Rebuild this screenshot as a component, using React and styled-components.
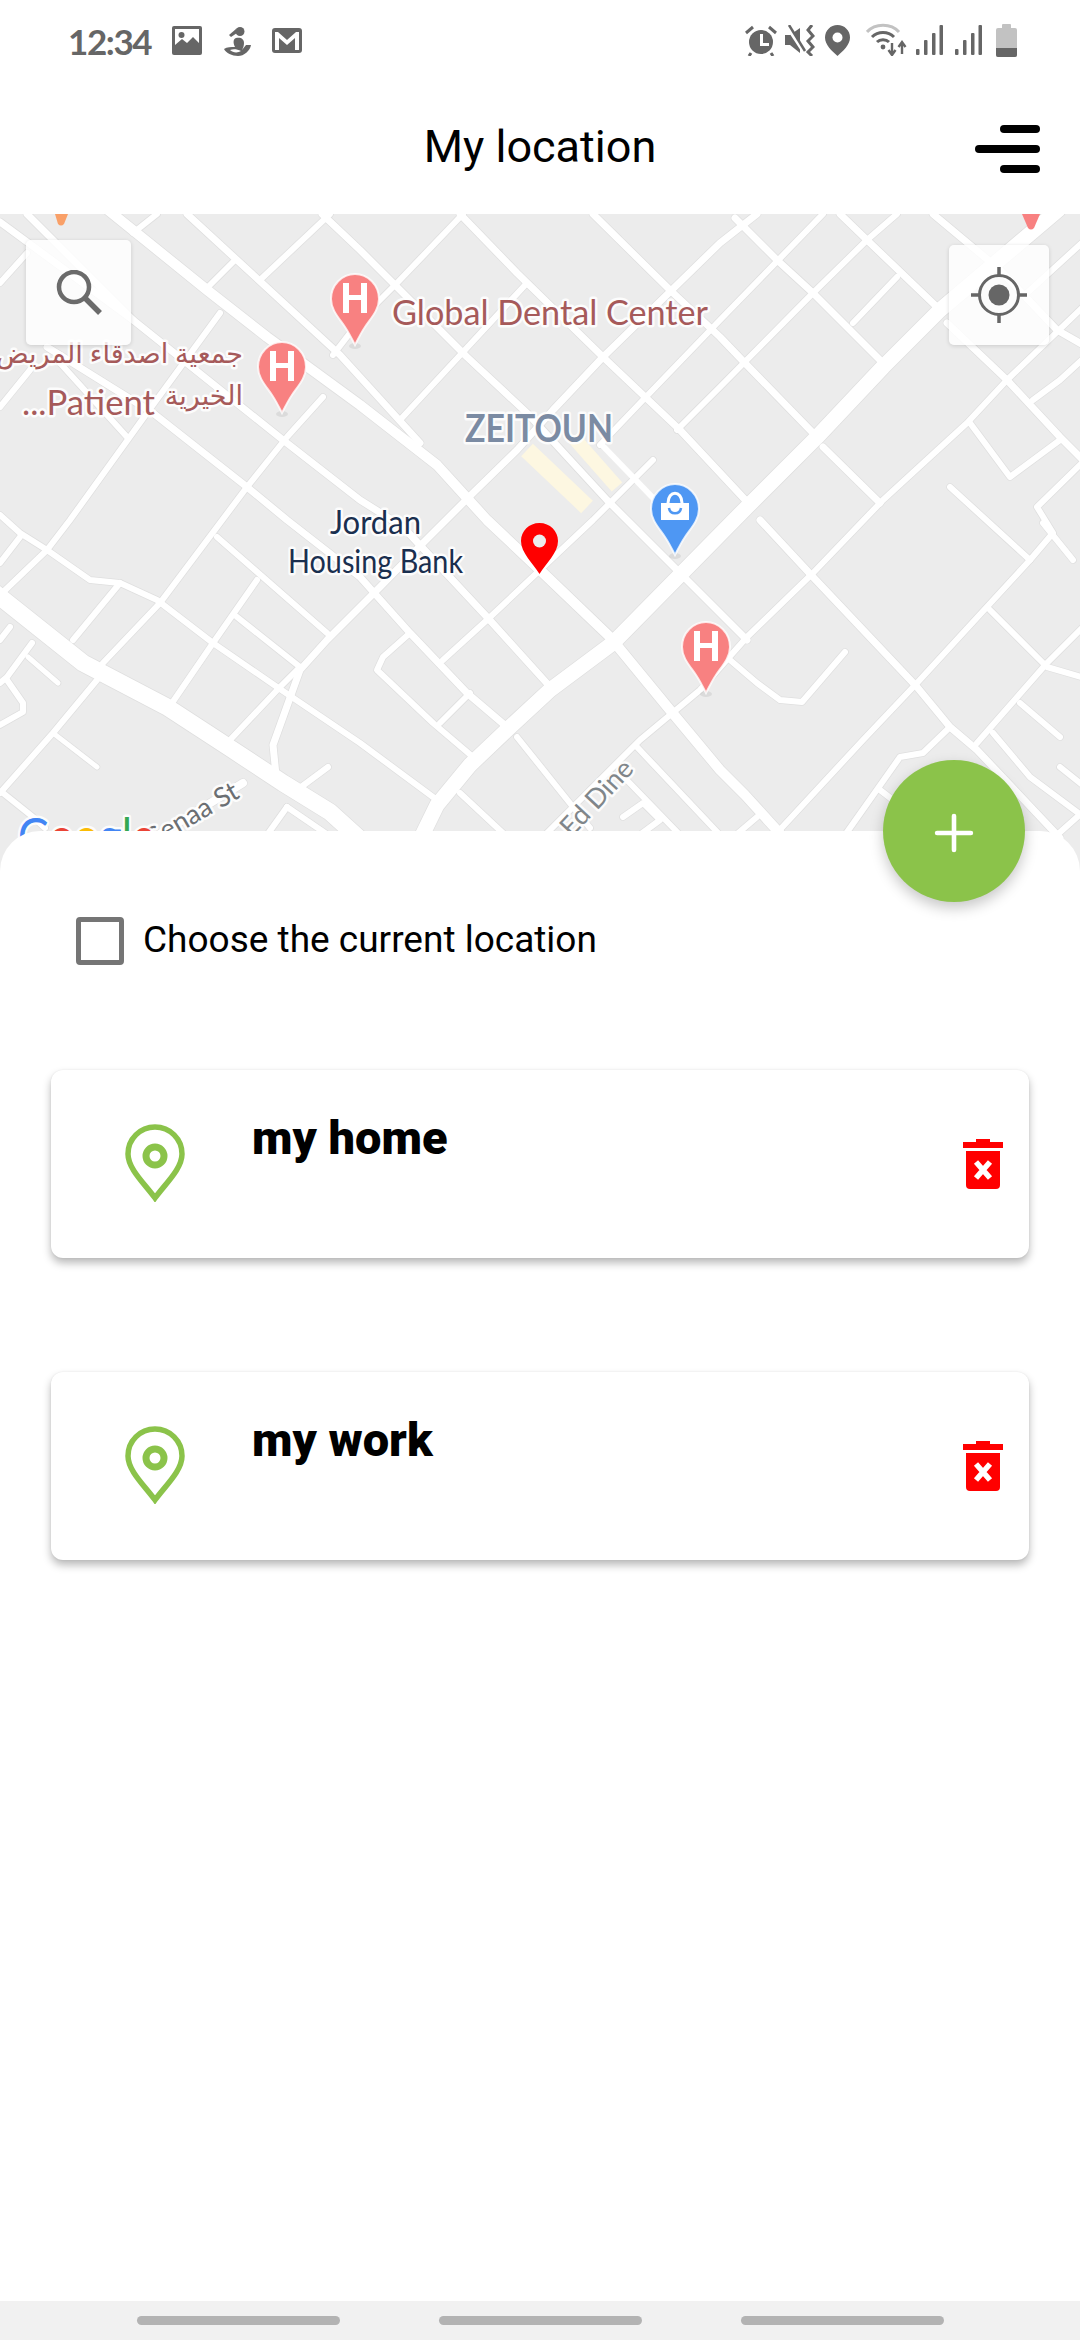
import React from "react";
import styled, { createGlobalStyle } from "styled-components";
import { Plus } from "lucide-react";

const GlobalStyle = createGlobalStyle`
  html, body {
    margin: 0;
    padding: 0;
    background: #ffffff;
    font-family: Roboto, "Liberation Sans", sans-serif;
  }
`;

const Page = styled.div`
  width: 1080px;
  height: 2340px;
  display: flex;
  flex-direction: column;
  overflow: hidden;
  background: #ffffff;
`;

/* status bar */
const StatusBar = styled.div`
  height: 70px;
  flex: none;
  display: flex;
  justify-content: space-between;
  align-items: flex-start;
  padding: 24px 63px 0 68px;
  box-sizing: border-box;
`;

const StatusGroup = styled.div`
  display: flex;
  align-items: flex-start;
`;

const Clock = styled.span`
  width: 83px;
  margin-top: -1px;
  font-family: Lato, sans-serif;
  font-size: 35px;
  font-weight: 700;
  line-height: 36px;
  letter-spacing: -1.4px;
  color: #666666;
  white-space: nowrap;
`;

const StatusIcon = styled.svg`
  display: block;
  flex: none;
  margin-left: ${(p) => p.$gap || 0}px;
  margin-top: ${(p) => p.$top || 0}px;
`;

/* title bar */
const TitleBar = styled.header`
  height: 144px;
  flex: none;
  position: relative;
  display: flex;
  align-items: center;
  justify-content: center;
`;

const Title = styled.h1`
  margin: 8px 0 0;
  font-size: 45px;
  font-weight: 400;
  color: #000000;
`;

const MenuButton = styled.div`
  position: absolute;
  right: 40px;
  top: 55px;
  width: 65px;
  display: flex;
  flex-direction: column;
  align-items: flex-end;
  gap: 12px;
`;

const MenuBar = styled.span`
  display: block;
  height: 8px;
  width: ${(p) => (p.$short ? 40 : 65)}px;
  border-radius: 4px;
  background: #000000;
`;

/* map */
const MapArea = styled.section`
  height: 666px;
  flex: none;
  position: relative;
  overflow: hidden;
  background: #ececec;
`;

const MapSvg = styled.svg`
  display: block;
`;

const MapLabel = styled.text`
  font-family: Lato, "DejaVu Sans", sans-serif;
  font-size: ${(p) => p.$size}px;
  font-weight: ${(p) => p.$weight || 400};
  fill: ${(p) => p.$color};
  stroke: rgba(255, 255, 255, 0.85);
  stroke-width: 5px;
  stroke-linejoin: round;
  paint-order: stroke;
`;

const MapButton = styled.div`
  position: absolute;
  top: ${(p) => p.$top}px;
  left: ${(p) => p.$left}px;
  width: ${(p) => p.$size}px;
  height: ${(p) => p.$size}px;
  display: flex;
  align-items: center;
  justify-content: center;
  border-radius: 5px;
  background: rgba(255, 255, 255, 0.83);
  box-shadow: 0 1px 4px rgba(0, 0, 0, 0.14);
`;

/* bottom sheet */
const Sheet = styled.section`
  flex: 1;
  position: relative;
  margin-top: -49px;
  border-radius: 40px 40px 0 0;
  background: #ffffff;
`;

const AddButton = styled.div`
  position: absolute;
  top: -71px;
  right: 55px;
  width: 142px;
  height: 142px;
  display: flex;
  align-items: center;
  justify-content: center;
  border-radius: 50%;
  background: #8bc34a;
  color: #ffffff;
  box-shadow: 0 6px 14px rgba(0, 0, 0, 0.22);

  svg {
    margin-top: 4px;
  }
`;

const CurrentRow = styled.label`
  display: flex;
  align-items: center;
  gap: 19px;
  padding: 86px 0 0 76px;
`;

const CheckBox = styled.span`
  width: 48px;
  height: 48px;
  box-sizing: border-box;
  border: 5px solid #757575;
  border-radius: 4px;
`;

const CheckLabel = styled.span`
  margin-top: -3px;
  font-size: 37px;
  color: #000000;
`;

const CardList = styled.div`
  display: flex;
  flex-direction: column;
  gap: 114px;
  padding: 105px 51px 0;
`;

const Card = styled.article`
  height: 188px;
  display: flex;
  align-items: flex-start;
  padding: 0 26px 0 74px;
  border-radius: 12px;
  background: #ffffff;
  box-shadow: 0 0 2px rgba(0, 0, 0, 0.08), 0 5px 9px rgba(0, 0, 0, 0.28);
`;

const CardPin = styled.svg`
  flex: none;
  margin-top: 54px;
`;

const CardName = styled.div`
  flex: 1;
  margin: 41px 0 0 67px;
  font-size: 47px;
  line-height: 54px;
  font-weight: 900;
  color: #000000;
`;

const CardTrash = styled.svg`
  flex: none;
  margin-top: 69px;
`;

/* navigation bar */
const NavBar = styled.nav`
  height: 39px;
  flex: none;
  display: flex;
  justify-content: center;
  align-items: flex-start;
  gap: 99px;
  padding-top: 15px;
  box-sizing: border-box;
  background: #f1f1f1;
`;

const NavPill = styled.span`
  width: 203px;
  height: 9px;
  border-radius: 5px;
  background: #b3b3b3;
`;

const roads = [
  // wide roads
  [15, "M1058 210L940 310L883 367L817 437L747 507L613 643L550 690L510 727L470 765L437 805L415 850"],
  [17, "M-5 593L83 663L167 707L233 750L283 783L330 812L372 850"],
  [10, "M108 210L207 290L267 337L360 405L437 465L487 520L540 570L610 637L670 710L720 770L745 795L795 850"],
  [8, "M243 783L150 840"],
  // streets running down to the right
  [7, "M0 222L133 320L283 440L360 500L403 527L487 617L553 690"],
  [7, "M27 214L133 320M47 347L153 413L247 487L287 520L360 577L410 633L467 693L507 727"],
  [7, "M187 214L340 355L420 443"],
  [7, "M322 214L360 250L467 357L527 413L607 500L627 520L747 640"],
  [7, "M460 214L517 273L603 357L680 430L750 505"],
  [7, "M760 520L813 577L917 687L950 727L977 750L1060 838"],
  [7, "M593 214L670 290L720 337L742 360L813 433M823 447L880 503"],
  [7, "M840 214L867 240L937 307M947 323L1007 380L1060 437L1085 462"],
  [7, "M735 218L777 260L813 293L850 330L883 363"],
  [7, "M933 214L1000 270L1057 330L1085 346"],
  [6, "M950 487L1030 560"],
  [6, "M990 610L1047 667L1085 678"],
  [6, "M1020 703L1060 737"],
  [6, "M993 733L1030 777L1085 818"],
  [6, "M1060 767L1085 787"],
  [6, "M1043 523L1073 560"],
  // streets running down to the left
  [6, "M157 214L133 233"],
  [6, "M233 262L205 290"],
  [6, "M330 214L260 280"],
  [6, "M220 313L147 413L70 520L47 550L0 595"],
  [6, "M323 397L287 437L247 487L160 603L103 663"],
  [6, "M97 680L53 733L0 793"],
  [6, "M463 214L397 283L360 320L333 355"],
  [6, "M527 283L400 420"],
  [7, "M757 214L720 243L603 357L553 410L517 450L473 493L423 543L380 587L327 640L300 670L273 745L276 775"],
  [6, "M300 667L280 687L230 740"],
  [6, "M823 214L720 320L643 400L600 445"],
  [6, "M653 460L593 520L487 620L443 660"],
  [6, "M897 277L853 323"],
  [6, "M897 214L867 240L813 293L720 387L677 430"],
  [6, "M1085 240L1027 293"],
  [6, "M1085 305L1007 380L967 423L883 500L813 573L747 637L700 690L640 740L540 840"],
  [6, "M1085 357L1060 380L1033 400"],
  [6, "M1060 440L1010 477L970 423"],
  [6, "M1085 460L1037 507L1053 533L1030 560L917 683L863 740L775 835"],
  [6, "M1085 625L1047 663L977 743"],
  [6, "M1085 810L1040 850"],
  // small streets in the left and bottom blocks
  [6, "M0 515L20 533L47 550L90 580L120 583L157 600L213 643L277 687L360 743L437 800"],
  [6, "M0 563L20 537"],
  [6, "M120 583L73 640"],
  [6, "M213 643L172 703"],
  [6, "M217 537L327 633"],
  [6, "M257 580L213 643"],
  [6, "M237 617L300 667"],
  [6, "M10 627L0 640"],
  [6, "M32 643L7 677L0 683"],
  [5, "M28 657L58 683"],
  [6, "M7 680L23 703L23 712L0 725"],
  [5, "M53 733L97 767"],
  [6, "M3 793L33 817L45 828"],
  [6, "M328 767L297 790"],
  [6, "M287 807L267 835"],
  [6, "M287 807L328 835"],
  [6, "M0 283L27 253"],
  [6, "M0 407L30 370"],
  [6, "M60 363L127 437"],
  [6, "M410 633L383 657L377 670L433 723L473 757"],
  [6, "M470 693L440 723"],
  [6, "M517 737L573 807L590 828"],
  [6, "M460 793L505 835"],
  [6, "M637 747L720 835"],
  [6, "M620 773L680 835"],
  [6, "M623 817L643 803L660 820L637 837"],
  [6, "M730 660L757 683L780 700L802 702L845 652"],
  [6, "M950 727L923 753L900 757L845 835"],
  [6, "M880 790L893 800"],
  [6, "M757 817L730 840"],
];

const StatusIcons = {
  image: (
    <StatusIcon width="30" height="29" viewBox="0 0 30 29" $gap={21} $top={2}>
      <rect width="30" height="29" rx="2" fill="#666" />
      <rect x="3" y="3" width="24" height="19" fill="#fff" />
      <circle cx="9.5" cy="9" r="3" fill="#666" />
      <path d="M3 19L10 13L15 17L21 11L27 17V24H3Z" fill="#666" />
    </StatusIcon>
  ),
  person: (
    <StatusIcon width="27" height="29" viewBox="0 0 27 29" $gap={22} $top={3}>
      <circle cx="16" cy="4.5" r="4.500" fill="#666" />
      <path d="M12 2L5 8L7 10L13 6Z" fill="#666" />
      <path d="M12 11C17 10 20 12 20 16C20 19 19 21 18 23L22 18H27C26 24 20 29 14 29C8 29 2 26 0 22C3 20 7 20 11 20C9 16 9 12 12 11Z" fill="#666" />
      <path d="M6 23C9 26 14 26 17 24C13 22 9 22 6 23Z" fill="#fff" />
    </StatusIcon>
  ),
  mail: (
    <StatusIcon width="30" height="25" viewBox="0 0 30 25" $gap={21} $top={4}>
      <rect width="30" height="25" rx="3" fill="#666" />
      <path d="M3 4H6L15 12L24 4H27V22H23V10L15 17L7 10V22H3Z" fill="#fff" />
    </StatusIcon>
  ),
  alarm: (
    <StatusIcon width="32" height="31" viewBox="0 0 32 31" $top={1}>
      <circle cx="16" cy="17" r="12" fill="#666" />
      <path d="M15 9H18V18H24V21H15Z" fill="#fff" />
      <path d="M1 8L8 2M31 8L24 2M6 28L4 31M26 28L28 31" stroke="#666" strokeWidth="3" />
    </StatusIcon>
  ),
  mute: (
    <StatusIcon width="30" height="31" viewBox="0 0 30 31" $gap={8} $top={1}>
      <path d="M0 10H5L15 3V28L5 20H0Z" fill="#666" />
      <path d="M2 1L19 27" stroke="#fff" strokeWidth="4" />
      <path d="M4 0L20 26" stroke="#666" strokeWidth="2.5" />
      <path d="M27 0L23 5L28 11L23 16L28 22L23 27L27 31" fill="none" stroke="#666" strokeWidth="3" />
    </StatusIcon>
  ),
  place: (
    <StatusIcon width="25" height="31" viewBox="0 0 25 31" $gap={10} $top={1}>
      <path d="M12.5 0C5.5 0 0 5.5 0 12.5C0 20 7 26 12.5 31C18 26 25 20 25 12.5C25 5.5 19.5 0 12.5 0Z" fill="#666" />
      <circle cx="12.5" cy="12.5" r="5" fill="#fff" />
    </StatusIcon>
  ),
  wifi: (
    <StatusIcon width="41" height="33" viewBox="0 0 41 33" $gap={16} $top={-1}>
      <path d="M1 9C9 0 25 0 33 9" fill="none" stroke="#c2c2c2" strokeWidth="3" />
      <path d="M6 14C12 8 22 8 28 14" fill="none" stroke="#666" strokeWidth="3" />
      <path d="M11 19C14 16 20 16 23 19" fill="none" stroke="#666" strokeWidth="3" />
      <circle cx="17" cy="24" r="2.4" fill="#666" />
      <path d="M26 20V31M22.5 27L26 32L29.500 27" fill="none" stroke="#666" strokeWidth="2.4" />
      <path d="M36 31V20M32.500 24L36 19L39.500 24" fill="none" stroke="#666" strokeWidth="2.400" />
    </StatusIcon>
  ),
  signal: (gap) => (
    <StatusIcon width="27" height="30" viewBox="0 0 27 30" $gap={gap} $top={1}>
      <rect x="0" y="24" width="3.500" height="6" rx="1" fill="#666" />
      <rect x="8" y="15" width="3.500" height="15" rx="1" fill="#666" />
      <rect x="16" y="8" width="3.500" height="22" rx="1" fill="#666" />
      <rect x="23.500" y="0" width="3.500" height="30" rx="1" fill="#666" />
    </StatusIcon>
  ),
  battery: (
    <StatusIcon width="21" height="33" viewBox="0 0 21 33" $gap={14} $top={0}>
      <rect x="6" y="0" width="9" height="5" rx="1" fill="#c2c2c2" />
      <rect x="0" y="4" width="21" height="29" rx="2" fill="#c2c2c2" />
      <path d="M0 24H21V31A2 2 0 0 1 19 33H2A2 2 0 0 1 0 31Z" fill="#666" />
    </StatusIcon>
  ),
};

const PIN_PATH = "M25 1C12 1 1 12 1 26C1 37 9 45 15 54C19 60 22 66 25 72C28 66 31 60 35 54C41 45 49 37 49 26C49 12 38 1 25 1Z";

const PoiPin = ({ x, y, color, children }) => (
  <g transform={`translate(${x} ${y})`}>
    <ellipse cx="25" cy="73" rx="6" ry="3" fill="rgba(0,0,0,0.07)" />
    <path d={PIN_PATH} fill={color} stroke="rgba(255,255,255,0.8)" strokeWidth="2" />
    {children}
  </g>
);

const HospitalMark = () => <path d="M13 10H19V22H31V10H37V40H31V27H19V40H13Z" fill="#fff" />;

const ShopMark = () => (
  <g>
    <path d="M11 20H39L39 37H11Z" fill="#fff" />
    <path d="M18 20C18 7 32 7 32 20" fill="none" stroke="#fff" strokeWidth="3" />
    <path d="M19 25C20 32 30 32 31 25" fill="none" stroke="#4e97f3" strokeWidth="2.500" />
  </g>
);

const MapDrawing = () => (
  <MapSvg width="1080" height="666" viewBox="0 214 1080 666">
    <g fill="none" strokeLinecap="round" strokeLinejoin="round">
      {roads.map(([w, d], i) => (
        <path key={`c${i}`} d={d} stroke="#dfdfdf" strokeWidth={w + 1.5} />
      ))}
      {roads.map(([w, d], i) => (
        <path key={`r${i}`} d={d} stroke="#ffffff" strokeWidth={w} />
      ))}
    </g>

    <path d="M527 450L587 507" stroke="#fdf7e1" strokeWidth="17" />
    <path d="M573 437L617 487" stroke="#fdf7e1" strokeWidth="14" />
    <path d="M600 443L655 500" stroke="#ffffff" strokeWidth="6" />

    <path d="M55 214H68L64 224Q61 227 58 224Z" fill="#f9a068" />
    <path d="M1022 214H1040L1034 228Q1031 231 1028 228Z" fill="#f88181" />

    <PoiPin x={330} y={273} color="#f88181"><HospitalMark /></PoiPin>
    <PoiPin x={257} y={341} color="#f88181"><HospitalMark /></PoiPin>
    <PoiPin x={681} y={621} color="#f88181"><HospitalMark /></PoiPin>
    <PoiPin x={650} y={483} color="#4e97f3"><ShopMark /></PoiPin>

    <path d="M539.500 523C529 523 521 531 521 541C521 553 533 563 539.500 574C546 563 558 553 558 541C558 531 550 523 539.500 523Z" fill="#ff0000" />
    <circle cx="539.500" cy="541" r="6.500" fill="#ececec" />

    <MapLabel x="392" y="325" $size={34} $color="#a65a5a" textLength="316" lengthAdjust="spacingAndGlyphs">Global Dental Center</MapLabel>
    <MapLabel x="243" y="363" textAnchor="end" $size={27} $color="#a65a5a">جمعية اصدقاء المريض</MapLabel>
    <MapLabel x="243" y="405" textAnchor="end" $size={27} $color="#a65a5a">الخيرية</MapLabel>
    <MapLabel x="22" y="415" $size={34} $color="#a65a5a" textLength="133" lengthAdjust="spacingAndGlyphs">...Patient</MapLabel>
    <MapLabel x="465" y="442" $size={38} $weight={700} $color="#7b8ba3" textLength="148" lengthAdjust="spacingAndGlyphs">ZEITOUN</MapLabel>
    <MapLabel x="330" y="534" $size={32} $color="#1a2f4f" textLength="91" lengthAdjust="spacingAndGlyphs">Jordan</MapLabel>
    <MapLabel x="288" y="573" $size={32} $color="#1a2f4f" textLength="175" lengthAdjust="spacingAndGlyphs">Housing Bank</MapLabel>
    <MapLabel x="241" y="797" textAnchor="end" transform="rotate(-30 241 797)" $size={27} $color="#6b6f73">Senaa St</MapLabel>
    <MapLabel x="635" y="770" textAnchor="end" transform="rotate(-47 635 770)" $size={27} $color="#80868a">Ed Dine</MapLabel>

    <MapLabel x="18" y="854" $size={50} textLength="137" lengthAdjust="spacingAndGlyphs" $color="#4285f4">
      G<tspan fill="#ea4335">o</tspan><tspan fill="#fbbc05">o</tspan><tspan fill="#4285f4">g</tspan><tspan fill="#34a853">l</tspan><tspan fill="#ea4335">e</tspan>
    </MapLabel>
  </MapSvg>
);

const SearchIcon = () => (
  <svg width="46" height="46" viewBox="0 0 46 46" fill="none" stroke="#6b6b6b">
    <circle cx="18" cy="17" r="15" strokeWidth="4.500" />
    <path d="M29 28L44 43" strokeWidth="5.500" />
  </svg>
);

const TargetIcon = () => (
  <svg width="56" height="56" viewBox="0 0 56 56" fill="none" stroke="#666666">
    <circle cx="28" cy="28" r="19.500" strokeWidth="3" />
    <circle cx="28" cy="28" r="10.500" fill="#666666" stroke="none" />
    <path d="M28 0V9M28 47V56M0 28H9M47 28H56" strokeWidth="3.500" />
  </svg>
);

const PinIcon = () => (
  <CardPin width="60" height="78" viewBox="0 0 60 78" fill="none" stroke="#8bc34a" strokeWidth="5.500">
    <path d="M30 3C15 3 3 15 3 30C3 45 20 60 30 74C40 60 57 45 57 30C57 15 45 3 30 3Z" />
    <circle cx="30" cy="32" r="9" strokeWidth="7" />
  </CardPin>
);

const TrashIcon = () => (
  <CardTrash width="40" height="50" viewBox="0 0 40 50">
    <path d="M13 0H27V3H40V9H0V3H13Z" fill="#ff0000" />
    <path d="M3 12H37V46A4 4 0 0 1 33 50H7A4 4 0 0 1 3 46Z" fill="#ff0000" />
    <path d="M13 23L27 39M27 23L13 39" stroke="#ffffff" strokeWidth="5.500" />
  </CardTrash>
);

const places = ["my home", "my work"];

const App = () => {
  return (
    <Page>
      <GlobalStyle />
      <StatusBar>
        <StatusGroup>
          <Clock>12:34</Clock>
          {StatusIcons.image}
          {StatusIcons.person}
          {StatusIcons.mail}
        </StatusGroup>
        <StatusGroup>
          {StatusIcons.alarm}
          {StatusIcons.mute}
          {StatusIcons.place}
          {StatusIcons.wifi}
          {StatusIcons.signal(9)}
          {StatusIcons.signal(12)}
          {StatusIcons.battery}
        </StatusGroup>
      </StatusBar>

      <TitleBar>
        <Title>My location</Title>
        <MenuButton>
          <MenuBar $short />
          <MenuBar />
          <MenuBar $short />
        </MenuButton>
      </TitleBar>

      <MapArea>
        <MapDrawing />
        <MapButton $top={26} $left={26} $size={105}>
          <SearchIcon />
        </MapButton>
        <MapButton $top={31} $left={949} $size={100}>
          <TargetIcon />
        </MapButton>
      </MapArea>

      <Sheet>
        <AddButton>
          <Plus size={58} strokeWidth={1.9} />
        </AddButton>
        <CurrentRow>
          <CheckBox />
          <CheckLabel>Choose the current location</CheckLabel>
        </CurrentRow>
        <CardList>
          {places.map((name) => (
            <Card key={name}>
              <PinIcon />
              <CardName>{name}</CardName>
              <TrashIcon />
            </Card>
          ))}
        </CardList>
      </Sheet>

      <NavBar>
        <NavPill />
        <NavPill />
        <NavPill />
      </NavBar>
    </Page>
  );
};

export default App;
